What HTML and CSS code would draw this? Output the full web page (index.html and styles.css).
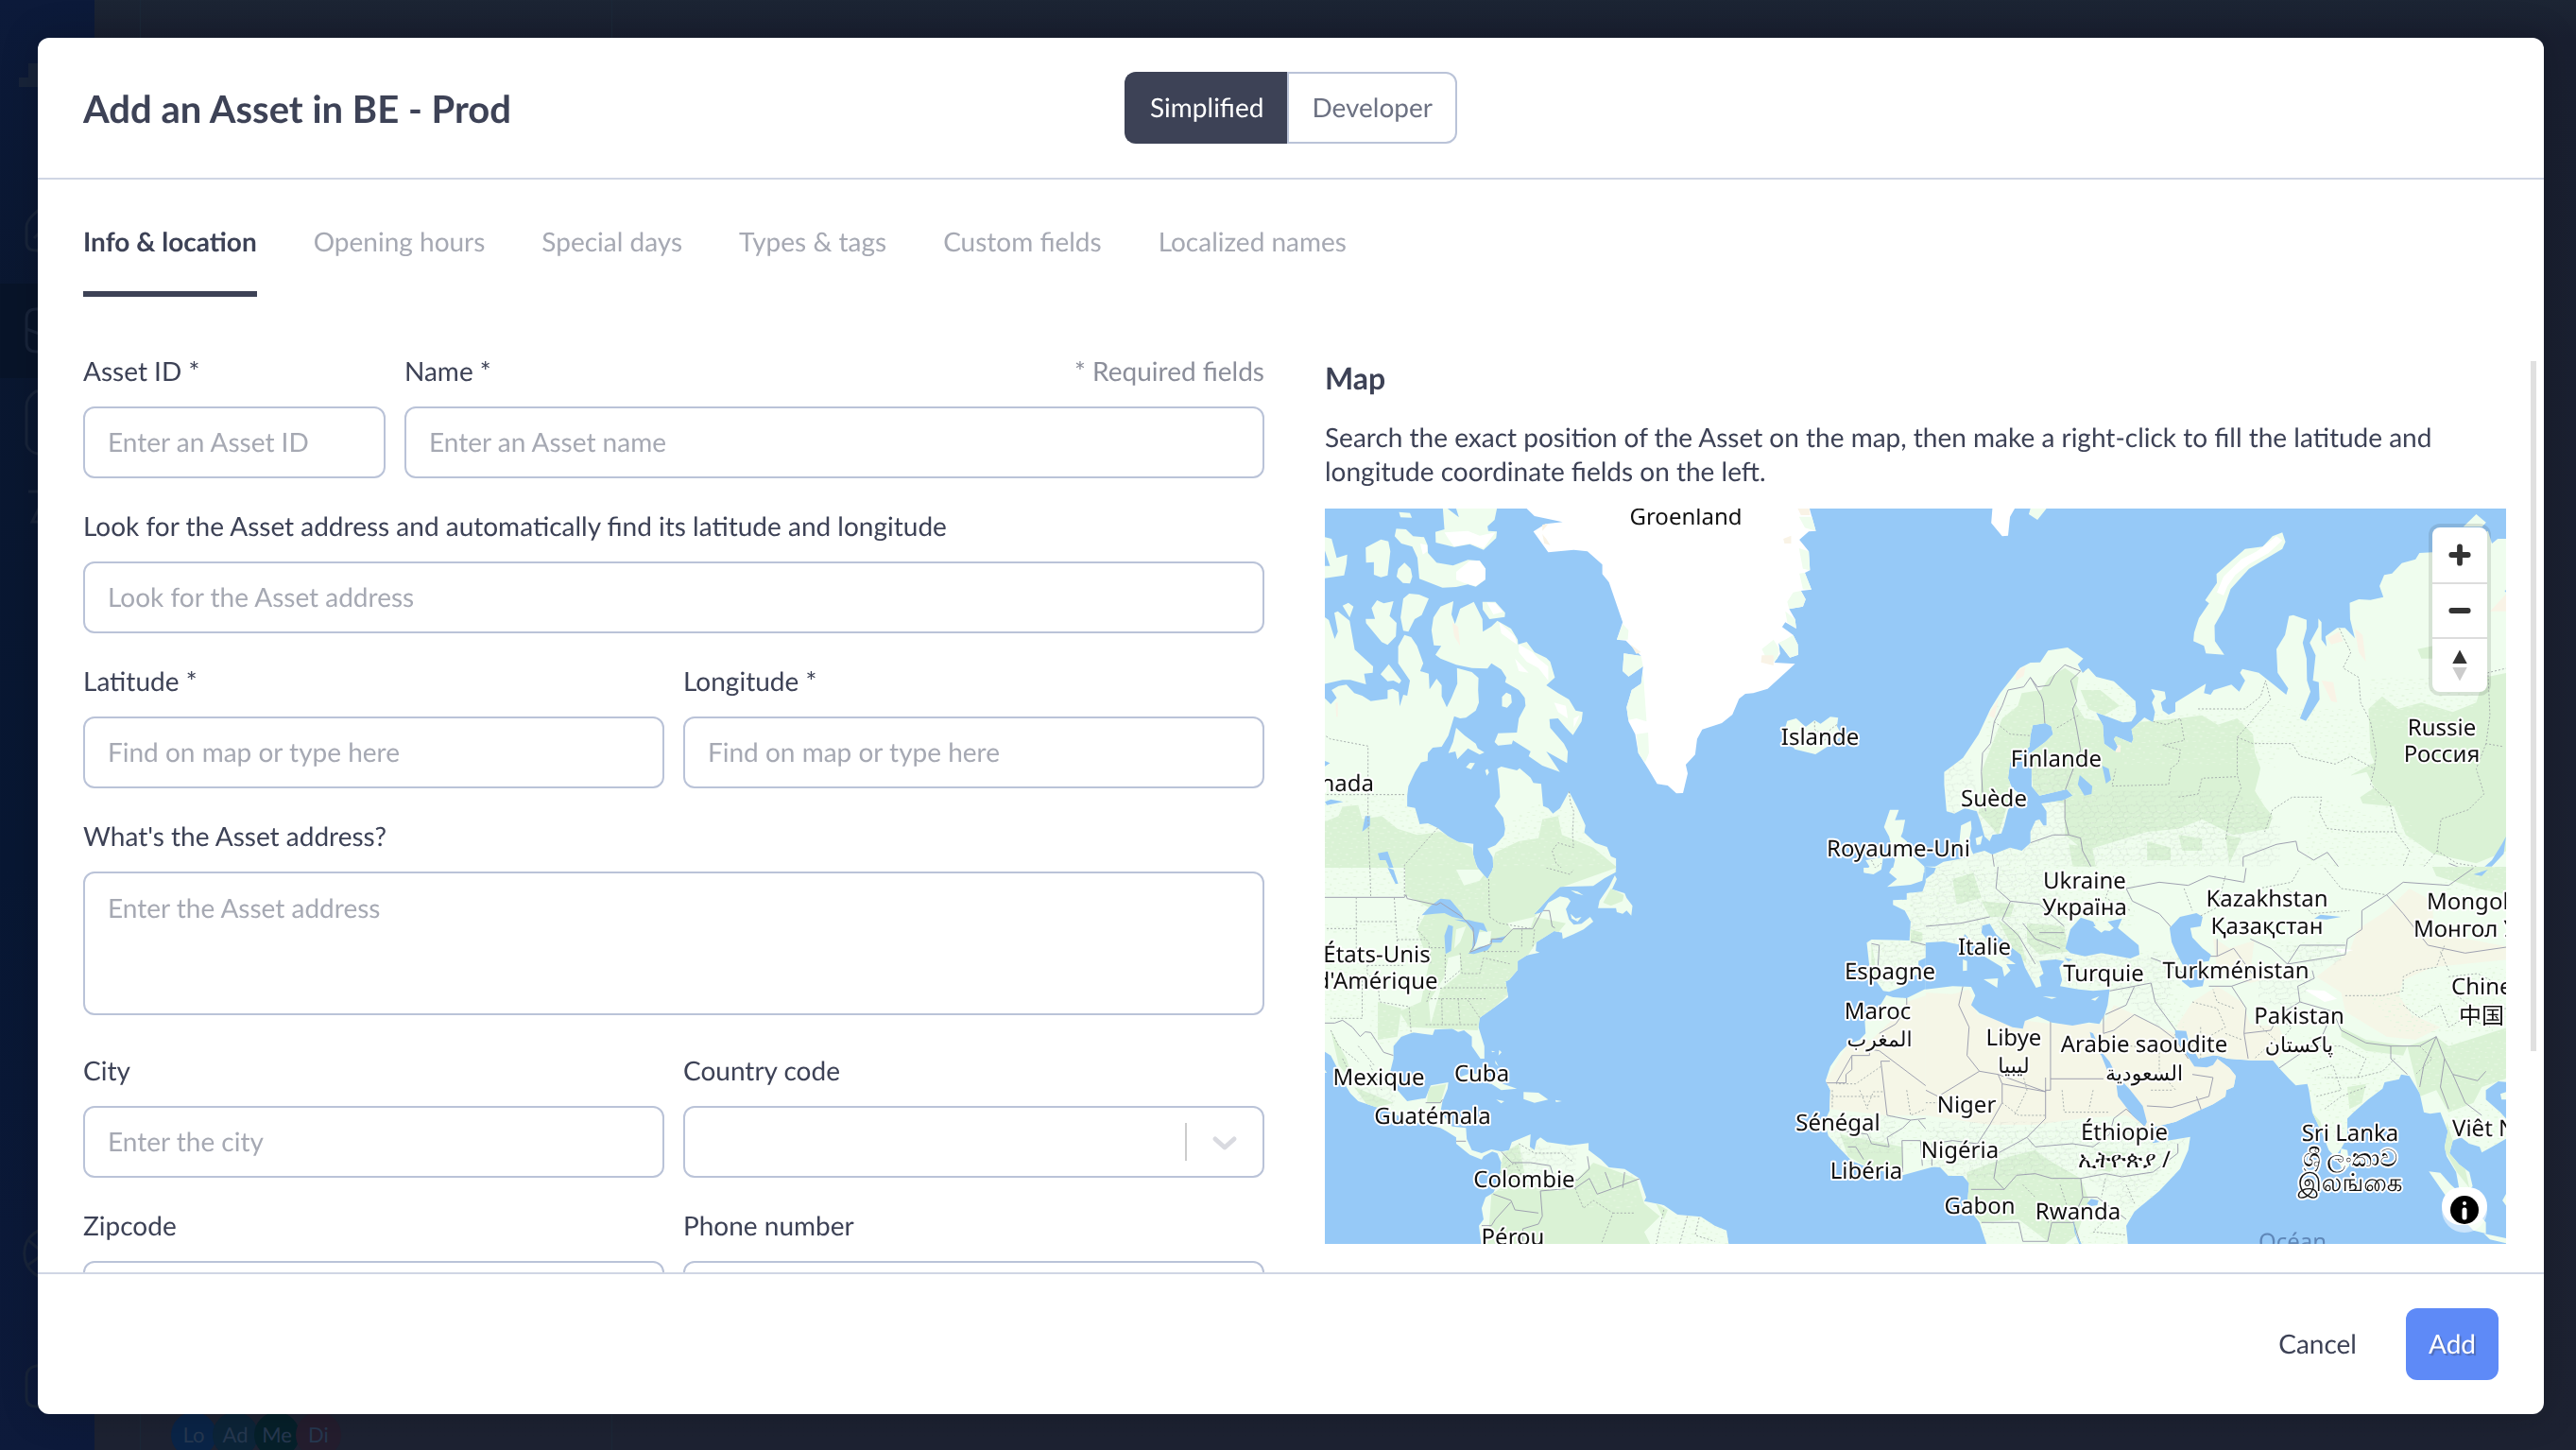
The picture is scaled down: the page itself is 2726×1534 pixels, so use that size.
FILE: index.html
```html
<!DOCTYPE html>
<html lang="en">
<head>
<meta charset="utf-8">
<meta name="viewport" content="width=device-width, initial-scale=1">
<title>Add an Asset in BE - Prod</title>
<link rel="stylesheet" href="styles.css">
</head>
<body>
<div class="app" aria-hidden="true">
  <div class="sidebar">
    <svg class="sidebar-icons" viewBox="0 0 100 1534" preserveAspectRatio="xMinYMin slice">
      <path class="active" d="M0 300H100V400H0Z"/>
      <path class="logo" d="M30 67H60V92H20V82H30Z"/>
      <path d="M60 214L50 216Q28 230 28 240V256Q28 265 38 265H60M36 252L42 246M60 327H38Q28 327 28 337V362Q28 372 38 372H60M28 348L44 354M60 414H38Q28 420 28 430V470Q30 478 40 480H60M30 520H50L34 552H60"/>
      <path d="M60 1300A27 27 0 1 0 60 1352M30 1312L44 1324M30 1338L44 1328M60 1445H38Q28 1447 28 1457V1478Q28 1488 38 1488H60"/>
    </svg>
  </div>
  <div class="page">
    <div class="page-panel">
      <div class="avatars"><span class="avatar lo">Lo</span><span class="avatar ad">Ad</span><span class="avatar me">Me</span><span class="avatar di">Di</span></div>
    </div>
  </div>
</div>

<div class="modal" role="dialog" aria-modal="true" aria-labelledby="modal-title">
  <header class="modal-header">
    <h1 id="modal-title">Add an Asset in BE - Prod</h1>
    <div class="toggle" role="group" aria-label="Editing mode">
      <button type="button" class="toggle-button selected" aria-pressed="true">Simplified</button>
      <button type="button" class="toggle-button" aria-pressed="false">Developer</button>
    </div>
  </header>

  <nav class="tabs" aria-label="Sections">
    <a href="#info" class="tab current" aria-current="page">Info &amp; location</a>
    <a href="#hours" class="tab">Opening hours</a>
    <a href="#days" class="tab">Special days</a>
    <a href="#types" class="tab">Types &amp; tags</a>
    <a href="#custom" class="tab">Custom fields</a>
    <a href="#names" class="tab">Localized names</a>
  </nav>

  <div class="modal-body">
    <form class="fields" id="asset-form">
      <div class="row row-id">
        <div class="field"><label for="asset-id">Asset ID *</label><input id="asset-id" type="text" placeholder="Enter an Asset ID"></div>
        <div class="field">
          <div class="label-line"><label for="name">Name *</label><span class="hint">* Required fields</span></div>
          <input id="name" type="text" placeholder="Enter an Asset name">
        </div>
      </div>
      <div class="field"><label for="lookup">Look for the Asset address and automatically find its latitude and longitude</label><input id="lookup" type="text" placeholder="Look for the Asset address"></div>
      <div class="row">
        <div class="field"><label for="lat">Latitude *</label><input id="lat" type="text" placeholder="Find on map or type here"></div>
        <div class="field"><label for="lng">Longitude *</label><input id="lng" type="text" placeholder="Find on map or type here"></div>
      </div>
      <div class="field field-area"><label for="address">What's the Asset address?</label><textarea id="address" placeholder="Enter the Asset address"></textarea></div>
      <div class="row">
        <div class="field"><label for="city">City</label><input id="city" type="text" placeholder="Enter the city"></div>
        <div class="field"><label for="country">Country code</label>
          <div class="select">
            <select id="country"><option></option></select>
            <svg class="select-mark" viewBox="0 0 84 72"><path class="bar" d="M3 16V56"/><path class="chevron" d="M34 33L44 42L54 33"/></svg>
          </div>
        </div>
      </div>
      <div class="row">
        <div class="field"><label for="zip">Zipcode</label><input id="zip" type="text"></div>
        <div class="field"><label for="phone">Phone number</label><input id="phone" type="tel"></div>
      </div>
    </form>

    <section class="map-column">
      <h2>Map</h2>
      <p>Search the exact position of the Asset on the map, then make a right-click to fill the latitude and longitude coordinate fields on the left.</p>
      <div class="map">
        <svg class="map-canvas" viewBox="0 0 1250 778" preserveAspectRatio="xMidYMid slice" role="img" aria-label="World map">
          <defs>
            <pattern id="specks" width="96" height="84" patternUnits="userSpaceOnUse">
              <path d="M4 6h8v3h-8zM20 2h3v6h-3zM34 12h6v4h-6zM50 5h4v3h-4zM66 9h10v3h-10zM84 3h4v7h-4zM10 22h4v5h-4zM26 28h9v4h-9zM44 24h3v3h-3zM58 27h6v6h-6zM78 21h7v3h-7zM3 40h6v3h-6zM18 44h4v7h-4zM38 41h4v3h-4zM49 46h10v3h-10zM70 39h4v6h-4zM86 44h6v3h-6zM8 60h10v4h-10zM29 57h4v4h-4zM42 63h6v3h-6zM62 58h4v3h-4zM76 62h9v5h-9zM4 75h4v3h-4zM22 73h6v6h-6zM40 78h4v3h-4zM54 72h8v3h-8zM72 77h3v4h-3zM88 72h5v3h-5z"/>
            </pattern>
            <pattern id="cells" width="74" height="68" patternUnits="userSpaceOnUse">
              <path class="admin" d="M0 12L9 16L16 11L25 18L36 14L44 20L55 15L63 17L74 12M16 11L14 0M25 18L22 29L29 37L24 46L30 56L27 68M0 41L10 38L22 29M44 20L48 33L57 38L55 50L62 58L60 68M29 37L40 40L48 33M57 38L66 34L74 41M24 46L12 54L0 50M30 56L42 54L55 50M62 58L74 50M63 17L66 34M36 14L38 4L27 0M38 4L60 0"/>
            </pattern>
            <path id="land-nw" d="M0 365L15 378L30 438L38 415L29 355L38 350L68 380L81 472L128 525L127 545L105 548L110 582L70 568L50 568L0 582ZM192 462L208 425L225 432L240 460L256 515L248 540L270 548L272 598L290 564L303 585L303 620L316 655L328 625L343 580L342 530L380 543L397 562L396 600L398 640L390 665L365 688L350 690L335 683L320 745L303 780L280 783L268 800L267 825L250 830L235 860L218 905L215 935V970L235 974L247 1026L268 1023L293 1038L320 1065L345 1082L384 1088L383 1120L390 1150L400 1178L433 1178L435 1165L433 1130L420 1103L440 1093L462 1062L465 1040L460 1005L438 968L452 940L450 900L445 850L455 843L495 855L502 848L530 878L537 895L557 898L562 968L575 975L587 992L605 975L628 922L650 975L670 1030L667 1052L695 1085L725 1098L735 1128L748 1135V1178H0V620L20 645L35 625L22 600L40 587L60 583L80 610L100 618L122 635L165 628L165 600L178 596L193 607L196 652L205 615L215 618L222 570L192 515ZM282 370L300 335L333 318L328 360L337 390L350 342L385 320L407 375L408 415L430 398L445 380L480 405L497 440L498 455L520 447L540 480L570 498L580 510L592 560L570 585L600 610L628 630L645 665L663 670L660 700L638 743L620 720L600 690L578 692L580 720L615 770L625 795L623 832L570 795L605 860L560 840L525 810L530 795L485 760L482 772L447 776L438 765L447 737L495 735L500 690L517 650L515 625L500 600L465 575L468 560L455 535L430 515L420 532L380 530L340 520L300 500L287 488L302 460L283 458L277 410Z"/>
            <path id="land-ne" d="M-5 1178L40 1145L65 1140L105 1130L120 1118L145 1110L165 1122L210 1100L240 1110L262 1085V1050L275 1015L285 1010L295 1030L303 1030V985L290 960L345 950L370 935L355 915L285 935L265 905V850L262 800L300 765L320 740L315 715L300 705L268 712L262 745L260 780L210 830L205 880L215 910L235 930L205 980L195 1030L188 1055L165 1060L158 1080L145 1065L135 1020L125 985L95 975L68 992L48 985L42 900V860L90 815L130 740L160 660L185 610L235 530L262 513L287 512L307 475L357 465L397 500L383 518L395 545L410 530L430 558L475 572L530 635L532 675L520 700L498 703L450 680L430 672L447 712L450 770L478 795L485 780L475 755L480 747L520 768L525 755L520 725L553 687L575 703L580 670L572 640L580 620L570 597L605 605L608 628L595 640L600 665L615 678L632 668V640L710 580L705 610L722 615L730 600L775 583L795 605L810 570L797 545L803 533L845 545L880 580L915 615L920 595L893 545L890 470L912 425L922 365L933 362L967 377V405L957 450L967 500L968 570L977 605L950 690L965 698L980 670L1000 630L998 575L983 570L990 490L975 450L997 400V373L1005 385V440L1018 462L1015 430L1045 403L1065 403L1090 435L1078 375L1077 323L1100 312L1130 314L1163 305L1153 270L1165 235L1185 230L1210 197L1245 185L1255 165L1300 162L1430 95L1440 135L1455 120H1480V1178Z"/>
            <path id="land-sw" d="M0 -6H395L405 10L420 30L433 0V-6H748L745 10L718 28L690 52L605 55L580 85L555 120L537 143L560 135L575 105L605 85L625 90L632 100L620 125L628 158L640 175L660 172L682 150L690 165L665 190L640 205L612 220L610 200L590 195L545 230L543 258L553 263L520 272L497 290V318L475 350L466 355L473 405L440 435L400 470L397 500L412 560V600H402L380 560V530L360 510L345 515L330 505L285 508L280 525L230 517L200 530L180 560V600L170 650L190 700L215 735L262 725L275 685L320 675L318 695L305 735L300 770L330 815L365 820L367 855L380 890L405 900L430 888L455 895L475 890L482 865L530 840L528 880L540 890L545 860L555 850L572 865L630 875L678 868V890L710 920L730 945L770 950L808 980L825 1040L820 1052L870 1065L905 1095L965 1102L1000 1130L1030 1145L1037 1200H405L398 1130L410 1110L405 1075L415 1040L435 1025L450 985L455 930L445 900L432 895L410 910L405 920L375 905L340 870V850L315 830L300 820L230 800L150 760L90 735L70 710L60 690L45 650L20 590L0 575Z"/>
            <path id="land-w-africa" d="M1575 -6V20L1540 35L1530 70L1490 75V95L1455 97V112L1485 130L1500 165L1497 225L1400 222L1388 232L1395 310L1392 350L1410 350L1430 385L1445 388L1480 372L1490 350L1520 330V290L1555 270L1575 235ZM1575 375L1535 380L1490 408L1455 405L1438 398L1425 425L1383 480L1385 520L1370 540L1340 555L1320 580L1295 625L1283 670L1295 700L1293 765L1280 800L1290 845L1315 880L1350 925L1400 950L1480 970L1568 940H1575Z"/>
            <path id="land-se" d="M-5 -10H1405V675L1380 672L1350 700V730L1385 770L1405 800V850L1365 880L1340 898L1335 880L1310 870L1290 850L1270 860L1262 900L1285 935L1310 960L1318 1005L1300 1030L1285 1010L1278 960L1255 910L1250 880L1258 830L1240 770L1215 775L1200 770L1190 710L1165 655L1145 650L1140 665L1105 675L1100 695L1065 730L1030 770L1015 790V850L1000 885L985 912L970 890L955 840L930 770L922 700L918 680L890 685L875 665L850 630L835 605H780L725 600L705 592L700 600L730 630L745 655L740 690L722 700L720 720L690 745L655 765L600 800L545 818L535 835L545 868L635 848L630 890L610 950L560 1020L500 1085L480 1130L485 1200H145L125 1120L95 1070L100 995L85 972L50 972L30 945L-5 942Z"/>
            <clipPath id="clip-nw"><use href="#land-nw"/></clipPath>
            <clipPath id="clip-ne"><use href="#land-ne"/></clipPath>
            <clipPath id="clip-sw"><use href="#land-sw"/></clipPath>
            <clipPath id="clip-wa"><use href="#land-w-africa"/></clipPath>
            <clipPath id="clip-se"><use href="#land-se"/></clipPath>
          </defs>
          <rect class="water" width="1250" height="778"/>

          <!-- Canada, Arctic islands, Greenland -->
          <g transform="matrix(.4146 0 0 .3333 -2 -8)">
            <use class="land" href="#land-nw"/>
            <g clip-path="url(#clip-nw)">
              <path class="forest" d="M0 1020L40 1000L50 970L90 965L100 1010L150 1000L190 1040L240 1060L300 1050L380 1100L400 1200H0ZM425 1180L440 1115L500 1080L550 1070L560 1010L600 1000L610 1060L650 1080L690 1100L748 1160V1200Z"/>
              <path class="speck-green" d="M0 930H215L300 1060H0ZM440 1040L560 950L640 1000L690 1090L450 1110Z"/>
              <path class="speck-light" d="M0 1030H300L400 1180H0ZM440 1110H720V1180H440Z"/>
              <path class="ice" d="M450 385L490 430L495 455L475 438L455 420ZM500 455L535 480L550 500L575 525V570L550 530L520 510L500 480ZM490 500L525 545L500 540ZM590 640L620 650L625 690L600 670ZM640 690L655 680L640 720Z"/>
              <path class="beach" d="M330 385L345 400L350 460L335 430ZM32 640H38V685H34Z"/>
              <path class="water" d="M5 825L18 832L5 842ZM5 955L20 947L52 955L10 965ZM108 1000H120V1030L100 1050ZM140 1118L165 1112L190 1200H182L160 1140L145 1140Z"/>
            </g>
            <path class="land" d="M0 113L22 120L35 181L62 170L60 200L54 236L0 246V206H18L0 140ZM109 148L148 122L167 128L172 160L165 236L148 242L130 234V194L110 196ZM208 196L224 215L228 240L222 262L204 260L188 240L192 215ZM187 88L212 90L230 112L258 115L267 140L268 165L290 196L332 205L370 187L400 190L415 215L414 250L390 272L370 265L340 273L305 275L246 247L241 180L228 145L200 135L183 112ZM194 35L222 38L227 53L198 52ZM306 24H318L347 52L340 24H444L438 60L420 80L422 95L444 97L442 118L410 155L375 137L335 146L288 132L287 98L310 90ZM205 310L220 294L245 297L270 310L252 362L234 375L218 415L205 412L198 370ZM124 340L138 315L155 325L180 318L170 365L188 387L186 430L165 457L150 448L110 388L109 374L133 374ZM50 332L65 323L78 335L68 370ZM407 320L440 320L465 355L464 368L425 375L408 345ZM457 622L468 608L480 615L482 640L470 656L457 652ZM340 720L362 745L390 770L395 785L412 798L400 805L370 785L343 820L338 795L320 800L332 765ZM365 845L375 831L388 832L378 852ZM414 855L420 850L424 862L418 872ZM168 518L200 570L195 580L180 570L165 572L147 550Z"/>
            <path class="ice" d="M340 225L375 190L400 190L415 215L414 250L390 270L360 260L340 250ZM248 135L266 140V160L255 170ZM310 100L370 95L400 110L440 100L410 150L375 135L335 145L320 120ZM418 322L440 325L460 352L435 360Z"/>
            <path class="ice" d="M520 24L540 48L612 67L568 73L537 97L575 163L640 155L675 160L713 202V232L730 258L765 385L750 440L773 443L812 492L768 484L765 540L780 557L817 525L812 580L788 600L775 655L780 700L797 740L805 800L830 850L853 898L880 903L902 928L919 927L931 865L926 837L950 805L955 755L968 725L1018 705L1045 678L1062 628L1078 612L1098 610L1135 596L1205 517L1152 513L1167 485L1163 450L1192 497L1213 488L1212 455L1200 425L1172 400L1180 385L1208 405L1205 375L1190 343L1225 335L1232 312L1220 285L1247 281L1230 228L1243 220L1240 160L1216 123L1240 97L1258 95L1242 24Z"/>
            <path class="land" d="M765 390L780 410L778 440L750 440ZM768 484L812 492L817 525L780 557L765 540ZM817 540L826 700L800 690L780 695L775 655L788 600L812 580ZM800 740L830 735L832 800L822 830L805 800ZM1190 343L1225 335L1232 312L1220 285L1200 290L1185 320ZM1163 450L1192 497L1213 488L1212 455L1200 425L1180 440ZM1216 230L1230 228L1247 281L1225 280ZM1180 350L1205 375L1208 405L1185 385ZM1215 150L1240 160L1243 220L1225 215ZM1120 470L1150 440L1165 470L1160 500L1140 520ZM1215 50H1248L1258 95L1230 85Z"/>
            <path class="beach" d="M1212 24H1242L1243 45H1220ZM560 75L575 73L560 95ZM560 105L570 120L580 140L565 135ZM785 455L812 480L800 485ZM1175 120L1195 110V135H1178ZM1120 490H1150V522L1118 512Z"/>
            <path class="land" d="M1185 698L1208 690L1232 717L1255 696L1270 707L1295 685L1315 688L1312 715L1325 745L1300 770L1257 804L1205 788L1185 760L1175 740ZM1447 980H1470L1460 1013L1486 1012L1480 1050L1475 1065L1490 1080L1500 1120L1535 1160V1180H1452L1460 1140L1445 1065L1432 1035ZM1385 1140L1430 1130L1425 1170L1405 1185L1380 1180L1395 1160Z"/>
            <path class="admin" d="M0 740L18 755L115 778V1000L120 1180M0 932H212M293 1038L208 1155V1180M1255 700V725L1280 745M1312 710L1295 725L1280 760M628 922L632 960L640 985L637 1060L640 1100L600 1085L585 1110L595 1150L630 1188L640 1178H735M1400 1140L1410 1165L1425 1150"/>
          </g>

          <!-- Scandinavia and Russia -->
          <g transform="matrix(.4146 0 0 .3333 638 -8)">
            <path class="land" d="M85 1030L110 1015L112 1040L105 1080L112 1110L120 1130H95L80 1090ZM122 1070L140 1062L135 1090L125 1092ZM258 42L262 24H303L280 60ZM905 100L913 130L905 152L820 215L773 280L755 345L732 395L733 445L757 488L710 484L705 460L678 445L680 418L692 372L718 325L708 315L738 260L737 232L810 152L855 145L880 112ZM1400 42L1425 68L1415 82H1367Z"/>
            <path class="ice" d="M165 24H222L210 50L205 110L190 112L162 70ZM890 112L905 125L870 165L820 200L785 235L765 270L755 300L738 290L755 240L800 185L840 160Z"/>
            <use class="land" href="#land-ne"/>
            <g clip-path="url(#clip-ne)">
              <path class="forest" d="M130 990L140 850L165 770L190 690L230 650L240 610L290 600L310 560L350 530L385 560L375 640L400 690L450 700L500 705L560 700L640 690L700 680L740 710L790 690L830 740L835 800L850 850L835 920L860 970L880 1000L870 1040L780 1060L700 1010L640 1040L560 1050L480 1080L400 1110L350 1060V960L270 940L260 780L215 830L205 960L180 1060ZM1130 800L1125 660L1160 620L1200 660L1260 640L1340 670L1400 640L1420 560L1480 545V1110L1400 1150L1290 1120L1220 1060L1190 970L1110 960L1080 870L1140 830ZM390 600L440 600L490 650L450 680L410 660ZM1250 470L1290 460V500H1260ZM760 1060L800 1070L770 1150ZM640 1060L700 1070V1110H650ZM560 1080L620 1100V1140H560ZM360 1090L420 1100L430 1170L370 1160Z"/>
              <path class="speck-green" d="M400 580H540V700H400ZM560 680L900 640L1120 720L1140 880L900 780L820 1010L740 1180H200V1080L500 1050L850 1000L900 850ZM860 660H1100V770H900ZM980 900L1110 980L1230 1060L1300 1170H960ZM1130 560H1400V660H1130Z"/>
              <path class="speck-light" d="M150 640H440V980H150ZM480 700H840V840H500ZM380 1010L840 940V1070H380ZM1130 620H1340V720H1130ZM1070 840L1200 960L1280 1120L1180 1040Z"/>
              <path class="land" d="M850 840L900 850L980 900L1120 860L1140 910L1080 960L960 930L880 980L840 930Z"/>
              <path class="beach" d="M1090 405L1110 425L1118 510L1100 480ZM1005 570L1035 575L1045 640L1030 635ZM1435 350L1480 290V350ZM1020 435L1050 415L1060 445L1030 455ZM225 540L250 525L245 555L225 570ZM155 680L180 630L170 690ZM480 775H492V797H480Z"/>
              <path class="water" d="M388 870L420 905L418 930L400 935L383 900ZM445 840L462 850L468 885L455 897ZM1476 1065L1470 1120L1425 1180L1395 1190L1440 1140L1465 1090ZM1472 285L1480 280V295Z"/>
              <path class="speck-cells" d="M42 840L110 820L130 960L200 960L190 1080H60ZM265 830L380 820L370 930H270ZM300 960L480 920L780 920L900 1020V1180H-5L260 1040Z"/>
              <path class="border" d="M148 985L140 930L137 860L140 800L160 770L170 700L190 650L205 600L245 590L262 560L290 620L295 640L300 725M262 560L280 590L310 585L325 550L350 520L370 530L390 540L365 570L380 635L370 660L380 720L390 790L350 920L350 1010L360 1060L390 1070L395 1110L425 1180M262 1085L320 1060L360 1060M165 1122L172 1180M805 1190V1130L890 1090L940 1080L945 1110L985 1140L1020 1115L1060 1180M1330 1150L1390 1180"/>
              <path class="admin" d="M690 660H810L850 620L862 570L875 630L790 750V870L800 910L770 1000L760 1080M575 700L610 710L645 690L655 760L600 775L645 790L640 830L620 850L615 900L470 905L480 850M640 940L690 930L700 880L790 875M790 750L830 770L930 770L950 810L1040 835L1080 810L1140 850L1145 800L1130 700L1105 640L1100 560L1060 530L1080 480L1060 430L1050 403M1140 850L1130 900L1180 960L1195 1050L1100 1050L1020 1040L1000 990L1005 940L930 940L880 980L860 1050M1480 530L1430 545L1435 680L1425 770L1470 780M1425 770L1400 850L1420 930L1380 980L1310 1010L1300 1110L1260 1170M1300 1110L1350 1150L1400 1160M170 700L210 740L262 745M330 720L385 680M400 540L395 545M1195 1050L1230 1110L1210 1170"/>
            </g>
          </g>

          <!-- Americas and western Africa -->
          <g transform="matrix(.4146 0 0 .3333 -2 382)">
            <use class="land" href="#land-sw"/>
            <g clip-path="url(#clip-sw)">
              <path class="forest" d="M210 -6H750L600 60L540 150L620 170L600 200L545 230L497 320L470 400L400 480L395 510L220 500L195 450L250 420L270 300L240 190L270 120L210 80ZM430 1030L470 1000L560 1010L600 1020L650 980L690 930L800 980L820 1060L860 1100L820 1150L840 1200H420ZM140 420L200 440L190 530L140 540ZM20 510L60 600L80 680L40 620ZM80 690L180 740L120 760ZM270 690L315 680L300 740L265 740ZM460 900L500 870L520 1000L450 980ZM850 1060L880 1080L870 1110Z"/>
              <path class="speck-green" d="M0 -6H210V80H0ZM0 170H240V200H0ZM190 150H290V300H230ZM120 430H240V560H120ZM0 290H110V470H0ZM860 1100H1037V1200H840ZM430 880H560V1020H430Z"/>
              <path class="speck-light" d="M210 20H420V130H210ZM280 270H480V480H280ZM330 0H440V60H330ZM660 960H800V1080H660Z"/>
              <path class="land" d="M270 420L310 340L320 280L350 270L350 330L300 380L275 490ZM340 0H420L400 35L360 50ZM390 200L430 195L425 240L385 250ZM340 190L365 180L350 230L335 250ZM470 170L540 150L530 185L480 188Z"/>
              <path class="water" d="M252 145L275 115L300 92L325 95L355 140L360 158L330 150L310 138L285 140ZM320 175L332 180L327 258L313 268L310 210ZM335 158L372 160L388 165L410 170L420 198L400 190L392 230L380 262L385 200L365 168ZM370 266L400 245L432 238L420 256L385 268ZM430 222L468 210L455 232L425 232ZM165 -6L180 0L192 45H185Z"/>
              <path class="border" d="M0 88H208L212 80L215 92L290 112L300 105L355 150L383 185L387 240L375 262L430 235L430 220L460 220L485 188H535L560 130L578 130L585 180L592 185M0 487H30L50 478L75 500L95 530L108 515L122 517L155 580L180 590M262 740H300L305 730M340 862H365M455 895L482 930L530 930L580 940L590 980L650 985L680 950L675 910M555 1020L600 1015L645 1010L680 980L700 1030L745 1010L810 980M720 960L735 1010M770 960L765 1010M555 1020L560 1100L550 1125L510 1140V1190M435 1030L480 1050L490 1080L550 1090M480 1055L440 1110L430 1130L405 1130"/>
              <path class="admin" d="M120 -6L122 88M208 -6V88M85 88V250M85 165H188M182 90L190 235M0 187H85M190 222H260M245 150L240 190L270 230L275 300M275 248H310M113 304H210M113 304V330L140 360L145 420L220 435L225 520M100 340V472H20M265 420L275 380L310 375H470M275 410H420M303 410L305 495M345 410L350 490M370 415L400 470M262 492H395M312 270V360L350 320M350 265L355 330L400 330L410 280L480 300M410 260H500M508 190L507 250M540 190L535 250M423 30L425 150L450 170L535 188M570 -6L630 15L640 0M20 510L40 560L90 610M90 560L130 620M50 600L70 650M120 620L150 700M640 1000L665 1075L690 1050L740 1090L710 1190M740 1090H795M870 1080L850 1190M930 1100L910 1190M960 1105L950 1160L1000 1180M450 960L520 1000L490 930ZM500 870L540 900L610 900L640 930"/>
              <path class="speck-cells" d="M60 620L190 700L180 750L90 730ZM455 870L650 880L640 1000L460 1010Z"/>
            </g>
            <path class="land" d="M745 18L750 30L738 62L770 75L775 90L790 115L787 146L775 130L765 140L750 135L748 122H702L706 98L730 55ZM632 65L650 70L665 82L645 75ZM632 140L645 155L660 150L650 165L635 155ZM345 660L380 645L430 660L460 680L495 695L455 700L430 680ZM512 706L550 708L575 730L540 740L512 728ZM442 730L463 735L455 742ZM593 731L610 735L595 738ZM430 575L440 577L432 580ZM450 572L456 580L448 590ZM440 605L448 625L440 615ZM5 635L10 645H5ZM1452 -6H1535L1530 35L1500 48L1440 55L1465 30L1445 10ZM1380 -6H1412L1395 12L1380 8Z"/>
            <path class="forest" d="M735 60L768 80L765 100L735 115L715 105Z"/>
            <use class="land" href="#land-w-africa"/>
            <g clip-path="url(#clip-wa)">
              <path class="desert" d="M1450 480L1490 420L1575 385V780H1440L1293 760L1283 670L1340 555L1400 540Z"/>
              <path class="forest" d="M1320 840L1400 860L1440 870L1478 880L1480 960L1400 950L1340 910ZM1400 230L1415 340L1400 350ZM1500 190L1530 200V225L1500 235Z"/>
              <path class="speck-green" d="M1390 220H1575V380H1390ZM1480 50H1575V240H1480ZM1290 800H1575V900H1290Z"/>
              <path class="border" d="M1500 228L1575 250M1400 235L1420 240L1415 340M1490 408V440L1462 490L1420 520M1283 677H1335V650L1350 635V590H1395V570L1420 575L1575 720M1447 608H1424L1440 780M1310 677L1350 590M1440 780L1500 795L1480 820L1440 850L1445 880L1400 870L1390 840L1330 830M1530 940L1525 860H1478L1480 960M1500 795L1575 785M1520 795L1550 840L1575 850M1340 880L1360 880L1380 920"/>
              <path class="admin" d="M1424 625L1360 680H1310M1300 700V760M1370 700L1390 760M1420 720H1300M1490 700L1500 780L1575 740M1390 750L1405 705L1430 705"/>
              <path class="speck-cells" d="M1400 230H1575V370H1400ZM1500 50H1575V240H1500ZM1290 780H1460V900H1320Z"/>
            </g>
          </g>

          <!-- Mediterranean, Africa, southern Asia -->
          <g transform="matrix(.4375 0 0 .3333 638 382)">
            <use class="land" href="#land-se"/>
            <g clip-path="url(#clip-se)">
              <path class="desert" d="M-5 390L60 395L100 380L120 460L300 490L425 490L450 430L500 460L560 500L600 520L700 590L760 650L700 760L545 830L480 780L370 790L260 810L150 810L-5 780ZM600 500L640 420L700 370L760 420L780 490L850 500L870 560L840 610L700 600ZM690 215L730 250L790 225L780 330L840 340L780 360L700 320ZM1165 60L1220 100L1225 200L1405 245V285L1220 310L1150 350L1140 400L1170 460L1240 500L1180 540L1110 530L1010 450L1000 390L940 340L1020 260L1040 190L1110 130Z"/>
              <path class="forest" d="M95 960L200 910L260 890L290 920L370 980L390 1050L360 1160L330 1190H300L220 1110L130 1120L95 1070ZM1160 560L1230 530L1260 560L1405 500V660L1340 690L1320 740L1260 770L1230 700L1190 720ZM1000 500L1060 540L1160 560L1150 590L1060 575L1000 530ZM170 160L220 200L240 300L210 260ZM240 170L330 180L340 260L270 270L240 230ZM60 30L110 10L130 90L70 110ZM1220 -10H1405V80L1330 60L1230 20ZM410 890L480 900L440 960L410 950ZM1015 690L1060 680L1050 740L1020 760ZM130 100L210 110L200 150H150ZM930 770L950 800L960 870L940 820ZM1255 800L1270 860L1300 950L1310 1010L1280 960L1250 890Z"/>
              <path class="speck-green" d="M-5 -10H500V180H-5ZM160 160H340V300H220ZM350 260H620V380H350ZM-5 820H600V1000H-5ZM900 520L1160 600V720L1000 900L920 700ZM1060 400L1405 300V520H1140ZM480 1000L600 940L480 1190H350ZM1260 740H1405V900H1260ZM540 380L620 400L620 520L560 480ZM830 230H1010V290H860Z"/>
              <path class="speck-light" d="M1180 540H1405V690H1180ZM100 920L360 980V1180H130ZM1240 -10H1405V70H1240Z"/>
              <path class="ice" d="M910 380L960 385L990 410L960 420ZM980 250L1030 255L1000 265Z"/>
              <path class="speck-cells" d="M-5 -10H300L340 160L330 260L240 370L150 250L-5 230ZM330 260H620L560 500L440 370L330 370ZM800 340H930L900 440L800 420ZM-5 800H540L630 860L480 1080L370 960L100 980L-5 930ZM850 240H1000V300L930 310Z"/>
              <path class="border" d="M85 370L75 430L100 500L95 590L125 640L25 720L-5 700M125 640L170 650L180 680L285 705V660M297 480V700H285V790M297 664H425M180 680V740L150 810L120 870L60 860L10 870V940M170 650L285 705M285 790L240 850L260 880L350 870L400 880L440 840L450 790L480 760L530 820M240 850L170 900L160 980L185 1015H105M185 1015L215 970L260 965L300 980L370 980L430 965L470 975L545 960L605 900V870M370 980L375 1040L350 1110L370 1190M375 1040H410L480 1110M130 1120H220L230 1180H290L300 1120H355M425 440V520L450 510L500 460L560 500L600 540L630 600M430 460L480 430L500 370L440 385M500 370L540 360L550 420L600 510M530 750L590 755L680 720L690 660L640 650M650 720L662 765M540 280L580 300L620 330M735 370L770 440L765 520L775 600M765 520L830 510L850 460L900 420L895 370L935 345L930 320M680 370L735 370L800 340M700 220V275H680M700 275L740 250L790 340L850 330M780 220L830 250L870 300L1010 270L1015 220L1050 190L1050 130L1110 80L1150 140L1210 240L1300 265L1405 245M1110 80L1150 40L1260 50L1320 -5M870 300L900 240L1010 240M495 100L480 60L560 40L630 50L680 20L765 40L770 -5M495 100L560 140L600 200M900 420L980 450L1000 510L1060 550L1120 560L1190 560L1230 530L1200 620L1190 690M980 450L950 540L850 630M1120 560L1120 600L1160 650M1230 530L1250 600L1270 650L1330 670L1350 640M1250 600L1240 690L1260 760M1270 650L1300 740L1340 780M230 170L260 220L320 250M170 -10L165 60L200 100L180 160L220 210L260 300M200 100L270 110L330 180M270 200H330M-5 180L80 170L150 150M640 1200"/>
              <path class="admin" d="M-5 740H130M230 650L240 700L210 780M180 740L220 780L285 780M325 700L330 770H440M400 700L390 760M490 560L580 570L600 520M540 700L590 700M560 580V640L600 700M640 420L700 440L720 500L640 560M660 500V600M740 440L700 420L690 380M720 520L760 540M820 450L880 500L850 550M790 480L840 540L790 600M1010 400L1100 400L1150 385V340L1180 320L1230 310L1250 240M1150 430L1190 470L1240 430L1260 500L1300 470L1360 500M1260 340L1330 330L1405 380M1280 400L1330 450L1405 440M920 560L1000 560L1060 600L1040 660L960 660M930 640L980 620L1000 700L940 720M1040 660L1100 640L1130 600M960 760L1000 720L1060 690M1190 560L1220 600L1180 650M450 20L430 90L490 130M620 60L640 130M720 20L700 120L610 180M800 60L880 40L900 -5M870 60L930 140L1020 130M960 -5L1000 60L1110 80M1240 260L1260 320M230 1000L260 1040M320 1000L340 1080L290 1120M430 980L420 1040M480 1000L500 1060M440 1100L400 1150L480 1160"/>
            </g>
            <path class="water" d="M-5 232L40 228L75 238L90 205L110 235L130 270L180 310L185 340L200 320L190 300L213 300L165 255L130 200L132 178L150 172L165 205L205 250L225 270L235 310L262 375L275 370L270 340L280 330L270 290L310 285L330 290L318 310L325 350L320 370L365 380L400 385L440 380L435 430L428 460L415 490L390 485L350 495L300 485L265 465L235 480L230 505L205 500L170 480L125 455L105 430L115 400L105 372L60 370L-5 380ZM345 190L370 152L400 165L410 190L440 195L450 185L435 165L470 155L460 185L510 240L512 270L490 282L420 265L380 275L345 265L333 250ZM330 280L350 285L340 292ZM585 185L610 150L650 138L665 150L660 180L635 185L640 215L665 250L685 270L680 290L655 295L670 340L665 370L635 375L615 355L620 310L600 260L590 230ZM392 515L400 520L418 575L440 610L455 650L490 700L520 750L530 800L525 815L495 780L460 720L455 670L435 640L420 590L400 560ZM598 510L625 512L632 550L655 600L690 590L705 592L690 620L675 628L645 625L630 595L600 540ZM935 155L950 143L1000 150L965 158ZM1320 15L1355 0L1340 20ZM385 1060L395 1045L413 1050L410 1065L395 1068ZM352 1110L360 1160L375 1195H368L355 1150ZM-5 -10L20 -5L15 10L-5 30Z"/>
            <path class="land" d="M85 285L95 290V320L85 322ZM135 348L170 345L168 375ZM278 402L312 405L300 410ZM395 412L415 402L405 416ZM1000 885L1015 890L1020 940L1005 960L995 930ZM1212 958L1240 962L1265 1000L1300 1040L1350 1120V1155L1320 1145L1280 1090L1250 1030ZM1345 1155L1405 1172V1188L1360 1174ZM1405 1015L1390 1050L1405 1078ZM1385 712L1400 705V730L1388 730ZM400 180L440 180L420 200Z"/>
          </g>

          <g class="places">
            <text x="382" y="17">Groenland</text>
            <text class="at-end" x="52" y="299">Canada</text>
            <text x="524" y="250">Islande</text>
            <text x="607" y="368">Royaume-Uni</text>
            <text x="774" y="273">Finlande</text>
            <text x="708" y="315">Suède</text>
            <text x="1182" y="240">Russie</text><text x="1182" y="268">Россия</text>
            <text x="804" y="402">Ukraine</text><text x="804" y="430">Україна</text>
            <text x="997" y="421">Kazakhstan</text><text x="997" y="450">Қазақстан</text>
            <text class="at-start" x="1166" y="424">Mongolie</text><text class="at-start" x="1152" y="453">Монгол Улс</text>
            <text class="at-start" x="1192" y="514">Chine</text><text class="at-start" x="1200" y="545">中国</text>
            <text x="698" y="472">Italie</text>
            <text x="824" y="500">Turquie</text>
            <text x="964" y="497">Turkménistan</text>
            <text x="598" y="498">Espagne</text>
            <text x="585" y="540">Maroc</text><text class="local" x="587" y="569">المغرب</text>
            <text x="1031" y="545">Pakistan</text><text class="local" x="1031" y="575">پاکستان</text>
            <text x="729" y="568">Libye</text><text class="local" x="729" y="597">ليبيا</text>
            <text x="867" y="575">Arabie saoudite</text><text class="local" x="867" y="605">السعودية</text>
            <text x="679" y="639">Niger</text>
            <text x="672" y="687">Nigéria</text>
            <text x="846" y="668">Éthiopie</text><text x="846" y="697">ኢትዮጵያ /</text>
            <text x="1085" y="669">Sri Lanka</text><text class="indic" x="1085" y="696">ශ්‍රී ලංකාව</text><text class="indic" x="1085" y="722">இலங்கை</text>
            <text class="at-start" x="1193" y="664">Viêt Nam</text>
            <text x="693" y="746">Gabon</text>
            <text x="797" y="752">Rwanda</text>
            <text x="543" y="658">Sénégal</text>
            <text x="573" y="709">Libéria</text>
            <text x="55" y="480">États-Unis</text><text x="55" y="508">d'Amérique</text>
            <text x="57" y="610">Mexique</text>
            <text x="166" y="606">Cuba</text>
            <text x="114" y="651">Guatémala</text>
            <text x="211" y="718">Colombie</text>
            <text x="199" y="779">Pérou</text>
            <text class="ocean" x="1024" y="784">Océan</text>
          </g>
        </svg>
        <div class="map-controls">
          <button type="button" aria-label="Zoom in"><svg viewBox="0 0 58 58"><path class="stroke" d="M20 29H38M29 20V38"/></svg></button>
          <button type="button" aria-label="Zoom out"><svg viewBox="0 0 58 58"><path class="stroke" d="M20 29H38"/></svg></button>
          <button type="button" aria-label="Reset bearing to north"><svg viewBox="0 0 58 58"><path class="north" d="M21 27L29 12L37 27Z"/><path class="south" d="M21 31L29 46L37 31Z"/></svg></button>
        </div>
        <button type="button" class="map-info" aria-label="Map attribution"><svg viewBox="0 0 48 48"><circle cx="24" cy="24" r="15"/><circle class="dot" cx="24" cy="17" r="2"/><path class="stem" d="M24 24V32"/></svg></button>
      </div>
    </section>
    <div class="scroll-thumb"></div>
  </div>

  <footer class="modal-footer">
    <button type="button" class="button">Cancel</button>
    <button type="submit" form="asset-form" class="button primary">Add</button>
  </footer>
</div>
</body>
</html>
```

FILE: styles.css
```css
* { box-sizing: border-box; }

body {
  margin: 0;
  height: 100vh;
  overflow: hidden;
  font: 28px/40px Lato, "Liberation Sans", sans-serif;
  text-rendering: geometricPrecision;
  color: #3d4256;
  background: #1d2232;
}

button, input, select, textarea { font: inherit; color: inherit; text-rendering: inherit; }
h1, h2, p { margin: 0; }

/* Dimmed application behind the dialog */
.app { display: flex; height: 100vh; }
.sidebar {
  flex: none;
  width: 100px;
  background: linear-gradient(180deg, #0c1a3a 0%, #0a1730 22%, #081733 60%, #0d1a3b 100%);
}
.sidebar-icons { display: block; width: 100%; height: 100%; fill: none; stroke: #18243a; stroke-width: 3; }
.sidebar-icons .active { fill: #081429; stroke: none; }
.sidebar-icons .logo { fill: #18243a; stroke: none; }
.page { flex: 1; display: flex; padding-left: 48px; background: linear-gradient(180deg, #1c2534 0, #191f30 40px, #1d2232 100%); }
.page-panel { display: flex; align-items: flex-end; width: 500px; padding-left: 32px; border: 1px solid #1b2838; border-width: 0 1px; }
.avatars { display: flex; margin-bottom: -8px; font-size: 22px; color: #263850; }
.avatar { width: 48px; height: 48px; margin-right: -4px; border-radius: 50%; line-height: 48px; text-align: center; }
.lo { background: #0a2447; }
.ad { background: #0c2438; }
.me { background: #06202a; }
.di { background: #241d2e; }

/* Dialog */
.modal {
  position: fixed;
  inset: 40px 34px 38px 40px;
  display: flex;
  flex-direction: column;
  overflow: hidden;
  border-radius: 12px;
  background: #fff;
  box-shadow: 0 0 40px rgba(0, 0, 0, .2);
}
.modal-header {
  flex: none;
  display: grid;
  grid-template-columns: 1fr auto 1fr;
  align-items: center;
  padding: 36px 48px;
  border-bottom: 2px solid #d0d6e4;
}
.modal-header h1 { padding-top: 2px; font-size: 40px; line-height: 48px; font-weight: 700; }
.toggle { display: flex; }
.toggle-button {
  height: 76px;
  padding: 0 24px 2px;
  border: 2px solid #bac3d8;
  border-radius: 0 12px 12px 0;
  background: #fff;
  color: #6c7182;
}
.toggle-button.selected {
  padding-left: 25px;
  padding-right: 25px;
  border-color: #3d4256;
  border-right: 0;
  border-radius: 12px 0 0 12px;
  background: #3d4256;
  color: #fff;
}

.tabs { flex: none; display: flex; gap: 60px; padding: 0 48px; }
.tab { padding: 45px 0 33px; border-bottom: 6px solid transparent; color: #a6a9b3; text-decoration: none; }
.tab.current { border-color: #3d4256; color: #3d4256; font-weight: 700; }

.modal-body {
  position: relative;
  flex: 1;
  min-height: 0;
  display: grid;
  grid-template-columns: 1fr 1fr;
  gap: 64px;
  padding: 58px 40px 0 48px;
  overflow: hidden;
}
.scroll-thumb { position: absolute; top: 68px; right: 8px; width: 6px; height: 730px; background: #e0e0e0; }

/* Form */
.fields { display: flex; flex-direction: column; gap: 30px; }
.row { display: grid; grid-template-columns: 1fr 1fr; gap: 20px; }
.row-id { grid-template-columns: 320px 1fr; }
.field { display: flex; flex-direction: column; gap: 18px; }
.field-area { padding-bottom: 8px; }
.label-line { display: flex; justify-content: space-between; }
.hint { color: #8b8e9a; }
input, select, textarea {
  display: block;
  width: 100%;
  height: 76px;
  margin: 0;
  padding: 0 24px 2px;
  border: 2px solid #bac3d8;
  border-radius: 12px;
  background: #fff;
}
textarea { height: 152px; padding: 16px 24px; resize: none; }
::placeholder { color: #a6a9b3; opacity: 1; }
.select { position: relative; }
.select select { appearance: none; }
.select-mark { position: absolute; top: 2px; right: 2px; width: 84px; height: 72px; fill: none; pointer-events: none; }
.select-mark .bar { stroke: #ccc; stroke-width: 2; }
.select-mark .chevron { stroke: #d9dae0; stroke-width: 5; stroke-linecap: round; stroke-linejoin: round; }

/* Map */
.map-column h2 { margin-bottom: 16px; font-size: 32px; line-height: 56px; font-weight: 700; }
.map-column p { margin-bottom: 22px; line-height: 36px; }
.map { position: relative; height: 778px; overflow: hidden; }
.map-canvas { display: block; width: 100%; height: 100%; }
.water { fill: #96c9f7; }
.land { fill: #effdee; }
.forest { fill: #daf2d5; }
.desert { fill: #f5f6e7; }
.ice { fill: #fff; }
.beach { fill: #f9f3e6; }
.speck-green, .speck-light { fill: url(#specks); }
.speck-cells { fill: url(#cells); }
#specks { fill: #e4f6df; }
.border, .admin { fill: none; stroke: #9fa1b0; stroke-width: 1; vector-effect: non-scaling-stroke; }
.admin { stroke: #a8b0ae; stroke-dasharray: 2 2; }
.places { font: 24px "Noto Sans", "Noto Sans CJK SC", "DejaVu Sans", sans-serif; text-anchor: middle; fill: #111; stroke: #fff; stroke-width: 4; stroke-linejoin: round; paint-order: stroke; }
.places .local { font-size: 22px; }
.places .indic { font-size: 26px; }
.places .at-start { text-anchor: start; }
.places .at-end { text-anchor: end; }
.places .ocean { fill: #5f87b8; stroke: none; }

.map-controls {
  position: absolute;
  top: 20px;
  right: 20px;
  width: 58px;
  border-radius: 8px;
  background: #fff;
  box-shadow: 0 0 0 4px rgba(0, 0, 0, .1);
}
.map-controls button { display: block; width: 58px; height: 58px; padding: 0; border: 0; background: none; }
.map-controls button + button { border-top: 2px solid #ddd; }
.map-controls svg { display: block; width: 58px; height: 56px; }
.map-controls .stroke { fill: none; stroke: #333; stroke-width: 6; stroke-linecap: round; }
.north { fill: #333; }
.south { fill: #ccc; }
.map-info {
  position: absolute;
  right: 20px;
  bottom: 12px;
  width: 48px;
  height: 48px;
  padding: 0;
  border: 0;
  border-radius: 24px;
  background: rgba(255, 255, 255, .5);
}
.map-info::before { content: ""; position: absolute; inset: 0 0 8px; border-radius: 24px; background: #fff; }
.map-info svg { position: relative; display: block; width: 48px; height: 48px; }
.map-info .dot { fill: #fff; }
.map-info .stem { stroke: #fff; stroke-width: 5; stroke-linecap: round; }

.modal-footer {
  flex: none;
  display: flex;
  justify-content: flex-end;
  gap: 28px;
  padding: 36px 48px;
  border-top: 2px solid #d0d6e4;
}
.button { height: 76px; padding: 0 24px 2px; border: 0; border-radius: 12px; background: #fff; }
.button.primary { background: #5e8af7; color: #fff; text-shadow: 2px 2px 1px rgba(61, 66, 86, .4); }
```
